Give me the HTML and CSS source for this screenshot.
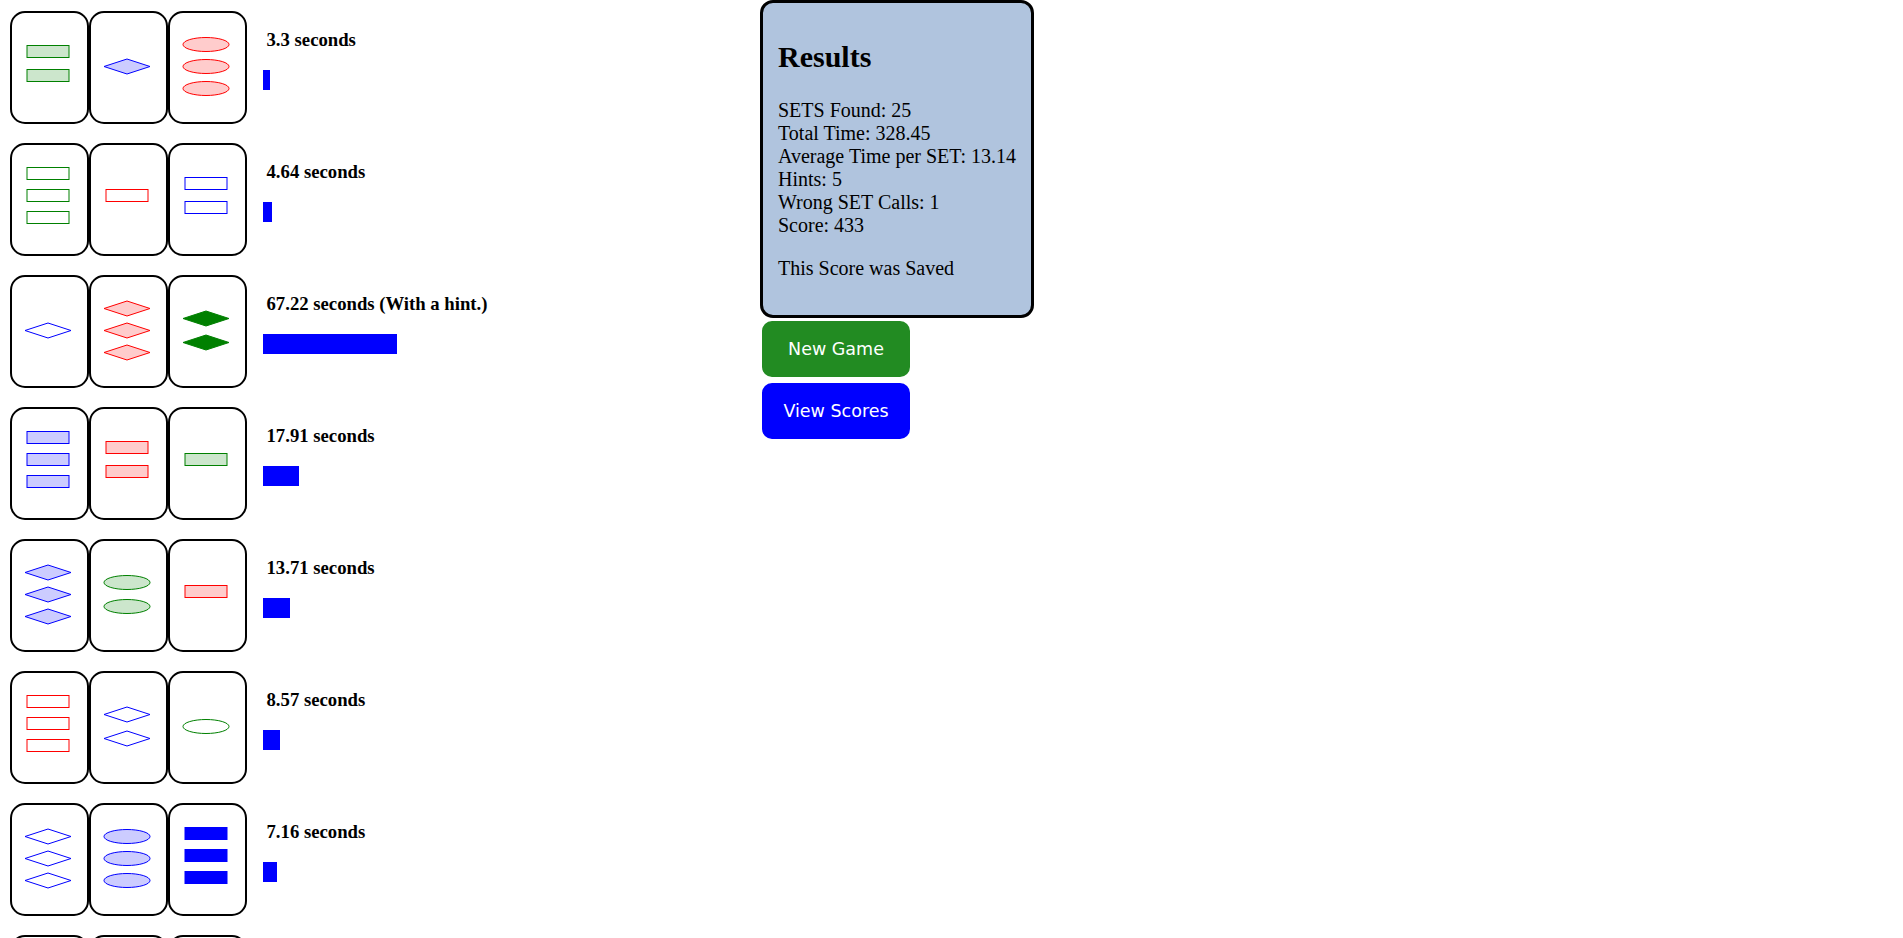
FILE: index.html
```html
<!DOCTYPE html>
<html>
<head>
<meta charset="utf-8">
<title>SET - Results</title>
<link rel="stylesheet" href="styles.css">
</head>
<body>
<div class="page">
  <div class="history">

    <div class="set-row">
      <div class="cards">
        <svg class="card" viewBox="0 0 79 113"><rect class="frame" x="1" y="1" width="77" height="111" rx="14"/>
          <rect class="sym g shade" x="17" y="34.5" width="42" height="12"/>
          <rect class="sym g shade" x="17" y="58.5" width="42" height="12"/>
        </svg>
        <svg class="card" viewBox="0 0 79 113"><rect class="frame" x="1" y="1" width="77" height="111" rx="14"/>
          <polygon class="sym b shade" points="15,55.5 38,48 61,55.5 38,63"/>
        </svg>
        <svg class="card" viewBox="0 0 79 113"><rect class="frame" x="1" y="1" width="77" height="111" rx="14"/>
          <ellipse class="sym r shade" cx="38" cy="33.5" rx="23" ry="7"/>
          <ellipse class="sym r shade" cx="38" cy="55.5" rx="23" ry="7"/>
          <ellipse class="sym r shade" cx="38" cy="77.5" rx="23" ry="7"/>
        </svg>
      </div>
      <div class="info">
        <h3 class="time">3.3 seconds</h3>
        <div class="bar" style="width: 6.6px"></div>
      </div>
    </div>

    <div class="set-row">
      <div class="cards">
        <svg class="card" viewBox="0 0 79 113"><rect class="frame" x="1" y="1" width="77" height="111" rx="14"/>
          <rect class="sym g open" x="17" y="24.5" width="42" height="12"/>
          <rect class="sym g open" x="17" y="46.5" width="42" height="12"/>
          <rect class="sym g open" x="17" y="68.5" width="42" height="12"/>
        </svg>
        <svg class="card" viewBox="0 0 79 113"><rect class="frame" x="1" y="1" width="77" height="111" rx="14"/>
          <rect class="sym r open" x="17" y="46.5" width="42" height="12"/>
        </svg>
        <svg class="card" viewBox="0 0 79 113"><rect class="frame" x="1" y="1" width="77" height="111" rx="14"/>
          <rect class="sym b open" x="17" y="34.5" width="42" height="12"/>
          <rect class="sym b open" x="17" y="58.5" width="42" height="12"/>
        </svg>
      </div>
      <div class="info">
        <h3 class="time">4.64 seconds</h3>
        <div class="bar" style="width: 9.28px"></div>
      </div>
    </div>

    <div class="set-row">
      <div class="cards">
        <svg class="card" viewBox="0 0 79 113"><rect class="frame" x="1" y="1" width="77" height="111" rx="14"/>
          <polygon class="sym b open" points="15,55.5 38,48 61,55.5 38,63"/>
        </svg>
        <svg class="card" viewBox="0 0 79 113"><rect class="frame" x="1" y="1" width="77" height="111" rx="14"/>
          <polygon class="sym r shade" points="15,33.5 38,26 61,33.5 38,41"/>
          <polygon class="sym r shade" points="15,55.5 38,48 61,55.5 38,63"/>
          <polygon class="sym r shade" points="15,77.5 38,70 61,77.5 38,85"/>
        </svg>
        <svg class="card" viewBox="0 0 79 113"><rect class="frame" x="1" y="1" width="77" height="111" rx="14"/>
          <polygon class="sym g solid" points="15,43.5 38,36 61,43.5 38,51"/>
          <polygon class="sym g solid" points="15,67.5 38,60 61,67.5 38,75"/>
        </svg>
      </div>
      <div class="info">
        <h3 class="time">67.22 seconds (With a hint.)</h3>
        <div class="bar" style="width: 134.44px"></div>
      </div>
    </div>

    <div class="set-row">
      <div class="cards">
        <svg class="card" viewBox="0 0 79 113"><rect class="frame" x="1" y="1" width="77" height="111" rx="14"/>
          <rect class="sym b shade" x="17" y="24.5" width="42" height="12"/>
          <rect class="sym b shade" x="17" y="46.5" width="42" height="12"/>
          <rect class="sym b shade" x="17" y="68.5" width="42" height="12"/>
        </svg>
        <svg class="card" viewBox="0 0 79 113"><rect class="frame" x="1" y="1" width="77" height="111" rx="14"/>
          <rect class="sym r shade" x="17" y="34.5" width="42" height="12"/>
          <rect class="sym r shade" x="17" y="58.5" width="42" height="12"/>
        </svg>
        <svg class="card" viewBox="0 0 79 113"><rect class="frame" x="1" y="1" width="77" height="111" rx="14"/>
          <rect class="sym g shade" x="17" y="46.5" width="42" height="12"/>
        </svg>
      </div>
      <div class="info">
        <h3 class="time">17.91 seconds</h3>
        <div class="bar" style="width: 35.82px"></div>
      </div>
    </div>

    <div class="set-row">
      <div class="cards">
        <svg class="card" viewBox="0 0 79 113"><rect class="frame" x="1" y="1" width="77" height="111" rx="14"/>
          <polygon class="sym b shade" points="15,33.5 38,26 61,33.5 38,41"/>
          <polygon class="sym b shade" points="15,55.5 38,48 61,55.5 38,63"/>
          <polygon class="sym b shade" points="15,77.5 38,70 61,77.5 38,85"/>
        </svg>
        <svg class="card" viewBox="0 0 79 113"><rect class="frame" x="1" y="1" width="77" height="111" rx="14"/>
          <ellipse class="sym g shade" cx="38" cy="43.5" rx="23" ry="7"/>
          <ellipse class="sym g shade" cx="38" cy="67.5" rx="23" ry="7"/>
        </svg>
        <svg class="card" viewBox="0 0 79 113"><rect class="frame" x="1" y="1" width="77" height="111" rx="14"/>
          <rect class="sym r shade" x="17" y="46.5" width="42" height="12"/>
        </svg>
      </div>
      <div class="info">
        <h3 class="time">13.71 seconds</h3>
        <div class="bar" style="width: 27.42px"></div>
      </div>
    </div>

    <div class="set-row">
      <div class="cards">
        <svg class="card" viewBox="0 0 79 113"><rect class="frame" x="1" y="1" width="77" height="111" rx="14"/>
          <rect class="sym r open" x="17" y="24.5" width="42" height="12"/>
          <rect class="sym r open" x="17" y="46.5" width="42" height="12"/>
          <rect class="sym r open" x="17" y="68.5" width="42" height="12"/>
        </svg>
        <svg class="card" viewBox="0 0 79 113"><rect class="frame" x="1" y="1" width="77" height="111" rx="14"/>
          <polygon class="sym b open" points="15,43.5 38,36 61,43.5 38,51"/>
          <polygon class="sym b open" points="15,67.5 38,60 61,67.5 38,75"/>
        </svg>
        <svg class="card" viewBox="0 0 79 113"><rect class="frame" x="1" y="1" width="77" height="111" rx="14"/>
          <ellipse class="sym g open" cx="38" cy="55.5" rx="23" ry="7"/>
        </svg>
      </div>
      <div class="info">
        <h3 class="time">8.57 seconds</h3>
        <div class="bar" style="width: 17.14px"></div>
      </div>
    </div>

    <div class="set-row">
      <div class="cards">
        <svg class="card" viewBox="0 0 79 113"><rect class="frame" x="1" y="1" width="77" height="111" rx="14"/>
          <polygon class="sym b open" points="15,33.5 38,26 61,33.5 38,41"/>
          <polygon class="sym b open" points="15,55.5 38,48 61,55.5 38,63"/>
          <polygon class="sym b open" points="15,77.5 38,70 61,77.5 38,85"/>
        </svg>
        <svg class="card" viewBox="0 0 79 113"><rect class="frame" x="1" y="1" width="77" height="111" rx="14"/>
          <ellipse class="sym b shade" cx="38" cy="33.5" rx="23" ry="7"/>
          <ellipse class="sym b shade" cx="38" cy="55.5" rx="23" ry="7"/>
          <ellipse class="sym b shade" cx="38" cy="77.5" rx="23" ry="7"/>
        </svg>
        <svg class="card" viewBox="0 0 79 113"><rect class="frame" x="1" y="1" width="77" height="111" rx="14"/>
          <rect class="sym b solid" x="17" y="24.5" width="42" height="12"/>
          <rect class="sym b solid" x="17" y="46.5" width="42" height="12"/>
          <rect class="sym b solid" x="17" y="68.5" width="42" height="12"/>
        </svg>
      </div>
      <div class="info">
        <h3 class="time">7.16 seconds</h3>
        <div class="bar" style="width: 14.32px"></div>
      </div>
    </div>

    <div class="set-row">
      <div class="cards">
        <svg class="card" viewBox="0 0 79 113"><rect class="frame" x="1" y="1" width="77" height="111" rx="14"/>
          <ellipse class="sym r solid" cx="38" cy="55.5" rx="23" ry="7"/>
        </svg>
        <svg class="card" viewBox="0 0 79 113"><rect class="frame" x="1" y="1" width="77" height="111" rx="14"/>
          <ellipse class="sym g solid" cx="38" cy="55.5" rx="23" ry="7"/>
        </svg>
        <svg class="card" viewBox="0 0 79 113"><rect class="frame" x="1" y="1" width="77" height="111" rx="14"/>
          <ellipse class="sym b solid" cx="38" cy="55.5" rx="23" ry="7"/>
        </svg>
      </div>
      <div class="info">
        <h3 class="time">10.48 seconds</h3>
        <div class="bar" style="width: 20.96px"></div>
      </div>
    </div>

  </div>

  <div class="side">
    <div class="results">
      <h2 class="results-title">Results</h2>
      <p class="stats">SETS Found: 25<br>Total Time: 328.45<br>Average Time per SET: 13.14<br>Hints: 5<br>Wrong SET Calls: 1<br>Score: 433</p>
      <p class="saved">This Score was Saved</p>
    </div>
    <div class="actions">
      <button class="btn btn-new">New Game</button>
      <button class="btn btn-scores">View Scores</button>
    </div>
  </div>
</div>
</body>
</html>
```

FILE: styles.css
```css
html, body {
  margin: 0;
  padding: 0;
  background: #ffffff;
}

body {
  font-family: "Liberation Serif", "Times New Roman", serif;
  color: #000000;
}

.page {
  display: flex;
  align-items: flex-start;
}

.history {
  flex: none;
  width: 760px;
  box-sizing: border-box;
  padding: 10.5px 0 0 10px;
}

.set-row {
  display: flex;
  align-items: flex-start;
  margin-bottom: 19px;
}

.cards {
  display: flex;
  flex: none;
}

.card {
  display: block;
  width: 79px;
  height: 113px;
}

.frame {
  fill: #ffffff;
  stroke: #000000;
  stroke-width: 2;
}

.sym {
  stroke-width: 1;
}

.sym.g { stroke: #008000; }
.sym.r { stroke: #ff0000; }
.sym.b { stroke: #0000ff; }

.sym.open { fill: none; }

.sym.g.shade { fill: #cce6cc; }
.sym.r.shade { fill: #ffcccc; }
.sym.b.shade { fill: #ccccff; }

.sym.g.solid { fill: #008000; }
.sym.r.solid { fill: #ff0000; }
.sym.b.solid { fill: #0000ff; }

.info {
  margin-left: 16px;
}

.time {
  font-size: 18.72px;
  font-weight: bold;
  margin: 18.72px 0;
  padding-left: 3.5px;
  white-space: nowrap;
}

.bar {
  height: 20px;
  background: #0000ff;
}

.side {
  flex: none;
  display: flex;
  flex-direction: column;
  align-items: flex-start;
}

.results {
  width: fit-content;
  background: #b0c4de;
  border: 3px solid #000000;
  border-radius: 13px;
  padding: 12px 14.5px 15px 15px;
  font-size: 20px;
  white-space: nowrap;
}

.results-title {
  font-size: 30px;
  font-weight: bold;
  margin: 24.9px 0;
}

.stats,
.saved {
  margin: 20px 0;
}

.actions {
  display: flex;
  flex-direction: column;
  gap: 2px;
  margin-top: 1px;
}

.btn {
  width: 152px;
  height: 60px;
  box-sizing: border-box;
  border: 2px solid #ffffff;
  border-radius: 12px;
  padding: 0;
  font-family: "DejaVu Sans", Verdana, sans-serif;
  font-size: 17.5px;
  color: #ffffff;
  cursor: pointer;
}

.btn-new {
  background: #228b22;
}

.btn-scores {
  background: #0000ff;
}
```
